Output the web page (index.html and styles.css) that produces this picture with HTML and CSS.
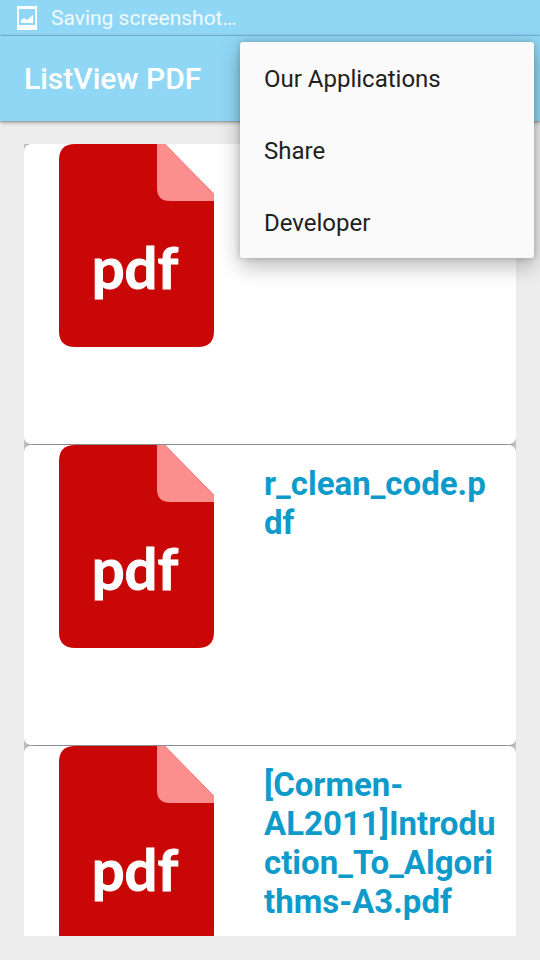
FILE: index.html
```html
<!DOCTYPE html>
<html lang="en">
<head>
<meta charset="utf-8">
<meta name="viewport" content="width=device-width, initial-scale=1">
<title>ListView PDF</title>
<link rel="stylesheet" href="styles.css">
</head>
<body>
<div class="status">
  <svg class="status-icon" viewBox="0 0 20 24" aria-hidden="true">
    <path fill="#fff" fill-rule="evenodd" d="M0 0H20V24H0ZM2 3V19H18V3Z"/>
    <path fill="#fff" d="M4 17V14L7 12L10 14L16 9V17Z"/>
  </svg>
  <span>Saving screenshot…</span>
</div>
<header class="bar">
  <h1 class="title">ListView PDF</h1>
  <nav class="menu">
    <button class="menu-item" type="button">Our Applications</button>
    <button class="menu-item" type="button">Share</button>
    <button class="menu-item" type="button">Developer</button>
  </nav>
</header>
<main class="content">
  <ul class="list">
    <li class="row">
      <svg class="file-icon" viewBox="0 0 155 203">
        <path fill="#c90707" d="M16 0H106L155 50V187Q155 203 139 203H16Q0 203 0 187V16Q0 0 16 0Z"/>
        <path fill="#fd8e8e" d="M98 0H106L155 50V57H111Q98 57 98 44Z"/>
        <text class="pdf-label" x="76" y="145" text-anchor="middle">pdf</text>
      </svg>
    </li>
    <li class="row">
      <svg class="file-icon" viewBox="0 0 155 203">
        <path fill="#c90707" d="M16 0H106L155 50V187Q155 203 139 203H16Q0 203 0 187V16Q0 0 16 0Z"/>
        <path fill="#fd8e8e" d="M98 0H106L155 50V57H111Q98 57 98 44Z"/>
        <text class="pdf-label" x="76" y="145" text-anchor="middle">pdf</text>
      </svg>
      <span class="name">r_clean_code.pdf</span>
    </li>
    <li class="row">
      <svg class="file-icon" viewBox="0 0 155 203">
        <path fill="#c90707" d="M16 0H106L155 50V187Q155 203 139 203H16Q0 203 0 187V16Q0 0 16 0Z"/>
        <path fill="#fd8e8e" d="M98 0H106L155 50V57H111Q98 57 98 44Z"/>
        <text class="pdf-label" x="76" y="145" text-anchor="middle">pdf</text>
      </svg>
      <span class="name">[Cormen-AL2011]Introduction_To_Algorithms-A3.pdf</span>
    </li>
  </ul>
</main>
</body>
</html>
```
FILE: styles.css
```css
* { box-sizing: border-box; }
body {
  margin: 0;
  height: 100vh;
  display: flex;
  flex-direction: column;
  background: #ededed;
  font-family: Roboto, sans-serif;
  overflow: hidden;
}
.status {
  flex: none;
  height: 36px;
  padding: 0 17px;
  display: flex;
  align-items: center;
  gap: 14px;
  background: #90d7f5;
  color: #f0faff;
  font-size: 21px;
}
.status-icon { width: 20px; height: 24px; }
.bar {
  position: relative;
  z-index: 1;
  flex: none;
  height: 85px;
  padding: 0 24px;
  display: flex;
  align-items: center;
  background: #90d7f5;
  box-shadow: 0 0 2px rgba(0, 0, 0, .5), 0 2px 4px rgba(0, 0, 0, .25);
}
.title {
  margin: 0;
  color: #fff;
  font-size: 30px;
  font-weight: 500;
}
.menu {
  position: absolute;
  top: 6px;
  right: 6px;
  width: 294px;
  display: flex;
  flex-direction: column;
  background: #fafafa;
  border-radius: 3px;
  box-shadow: 0 0 6px rgba(0, 0, 0, .2), 0 8px 22px rgba(0, 0, 0, .28);
}
.menu-item {
  height: 72px;
  padding: 2px 24px 0;
  border: 0;
  background: none;
  color: #212121;
  font: 24px Roboto, sans-serif;
  text-align: left;
}
.content {
  flex: 1;
  min-height: 0;
  display: flex;
  padding: 23px 24px 24px;
}
.list {
  flex: 1;
  margin: 0;
  padding: 0;
  overflow: hidden;
  list-style: none;
  background: linear-gradient(90deg, #c4c4c4, #8c8c8c 12px, #8c8c8c calc(100% - 12px), #c4c4c4);
}
.row {
  display: flex;
  gap: 50px;
  height: 300px;
  padding: 0 20px 0 35px;
  background: #fff;
  border-radius: 7px;
}
.row + .row { margin-top: 1px; }
.file-icon { flex: none; width: 155px; height: 203px; }
.pdf-label {
  fill: #fff;
  stroke: #fff;
  stroke-width: 1px;
  font-family: Lato, sans-serif;
  font-size: 58px;
  font-weight: 700;
}
.name {
  flex: 1;
  min-width: 0;
  padding-top: 19px;
  color: #0f9bca;
  font-size: 33px;
  font-weight: 700;
  line-height: 39px;
  overflow-wrap: anywhere;
}
```
